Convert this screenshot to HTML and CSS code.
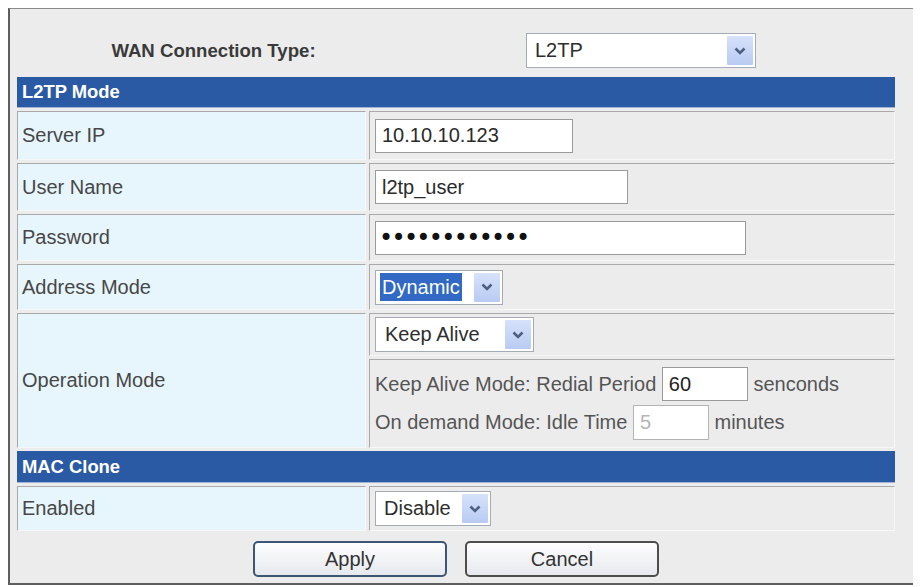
FILE: index.html
```html
<!DOCTYPE html>
<html lang="en">

<head>
    <meta charset="UTF-8">
    <meta name="viewport" content="width=device-width, initial-scale=1.0">
    <title>WAN Setup - L2TP</title>
    <link rel="stylesheet" href="styles.css">
</head>

<body>
    <div class="frame">
        <div class="wan-row">
            <div class="wan-label">WAN Connection Type:</div>
            <div class="wan-field">
                <span class="combo combo-wan">
                    <span class="combo-text">L2TP</span>
                    <span class="combo-btn"><svg width="12" height="8" viewBox="0 0 12 8"><path d="M1.5 1.5 L6 6 L10.5 1.5" fill="none" stroke="#4d5f82" stroke-width="2.6"/></svg></span>
                </span>
            </div>
        </div>

        <div class="form-grid">
            <div class="section">L2TP Mode</div>

            <div class="label">Server IP</div>
            <div class="field"><input type="text" class="txt w-ip" value="10.10.10.123"></div>

            <div class="label">User Name</div>
            <div class="field"><input type="text" class="txt w-user" value="l2tp_user"></div>

            <div class="label">Password</div>
            <div class="field"><input type="password" class="txt pwd" value="secretpasswd"></div>

            <div class="label">Address Mode</div>
            <div class="field">
                <span class="combo combo-addr">
                    <span class="combo-text"><span class="selected">Dynamic</span></span>
                    <span class="combo-btn"><svg width="12" height="8" viewBox="0 0 12 8"><path d="M1.5 1.5 L6 6 L10.5 1.5" fill="none" stroke="#4d5f82" stroke-width="2.6"/></svg></span>
                </span>
            </div>

            <div class="label op-label">Operation Mode</div>
            <div class="field">
                <span class="combo combo-op">
                    <span class="combo-text">Keep Alive</span>
                    <span class="combo-btn"><svg width="12" height="8" viewBox="0 0 12 8"><path d="M1.5 1.5 L6 6 L10.5 1.5" fill="none" stroke="#4d5f82" stroke-width="2.6"/></svg></span>
                </span>
            </div>
            <div class="field sub">
                <div class="sub-line">Keep Alive Mode: Redial Period <input type="text" class="txt w-period" value="60"> senconds</div>
                <div class="sub-line">On demand Mode: Idle Time <input type="text" class="txt w-idle" value="5" disabled> minutes</div>
            </div>

            <div class="section">MAC Clone</div>

            <div class="label">Enabled</div>
            <div class="field">
                <span class="combo combo-mac">
                    <span class="combo-text">Disable</span>
                    <span class="combo-btn"><svg width="12" height="8" viewBox="0 0 12 8"><path d="M1.5 1.5 L6 6 L10.5 1.5" fill="none" stroke="#4d5f82" stroke-width="2.6"/></svg></span>
                </span>
            </div>
        </div>

        <div class="actions">
            <button class="btn btn-default">Apply</button>
            <button class="btn">Cancel</button>
        </div>
    </div>
</body>

</html>
```

FILE: styles.css
```css
body {
    margin: 8px;
    background-color: #fff;
    font-family: "Liberation Sans", Arial, sans-serif;
    color: #3c3c3c;
}

.frame {
    width: 908px;
    box-sizing: border-box;
    background-color: #ececec;
    border: 2px solid #5e5e5e;
    border-top: 1px solid #8a8a8a;
    padding-bottom: 6px;
}

/* top line: connection type */
.wan-row {
    display: flex;
    padding-top: 24px;
    margin-left: 7px;
}

.wan-label {
    width: 393px;
    text-align: center;
    font-weight: bold;
    font-size: 18.6px;
    line-height: 35px;
    color: #3a3a3a;
}

.wan-field {
    padding-left: 116px;
}

/* main form grid */
.form-grid {
    display: grid;
    grid-template-columns: 349px 1fr;
    grid-template-rows: 31px 49px 48px 47px 46px 43px 89px 32px 45px;
    gap: 3px;
    margin: 9px 19px 0 7px;
}

.section {
    grid-column: 1 / 3;
    background-color: #2b5aa4;
    color: #fff;
    font-weight: bold;
    font-size: 18.4px;
    padding-left: 5px;
    display: flex;
    align-items: center;
    border-bottom: 1px solid #9fb4d4;
}

.label,
.field {
    border: 1px solid;
    border-color: #a9a9a9 #f7f7f7 #f7f7f7 #a9a9a9;
    display: flex;
    align-items: center;
    font-size: 20px;
}

.label {
    background-color: #e7f6fc;
    padding-left: 4px;
    color: #474747;
}

.field {
    padding-left: 5px;
}

.op-label {
    grid-row: span 2;
}

.sub {
    flex-direction: column;
    align-items: flex-start;
    justify-content: flex-start;
    padding-top: 7px;
    gap: 4px;
    font-size: 20px;
    color: #555;
}

.sub-line {
    height: 34px;
    display: flex;
    align-items: center;
    white-space: pre;
}

/* text inputs */
.txt {
    box-sizing: border-box;
    height: 34px;
    border: 1px solid #9a9a9a;
    background: #fff;
    font-family: "Liberation Sans", Arial, sans-serif;
    font-size: 20px;
    color: #2a2a2a;
    padding: 0 6px;
    margin: 0;
    outline: none;
}

.w-ip {
    width: 198px;
}

.w-user {
    width: 253px;
}

.pwd {
    width: 371px;
    font-family: "DejaVu Sans", sans-serif;
    font-size: 24px;
    letter-spacing: -1.7px;
    padding-left: 3px;
    color: #111;
}

.w-period {
    width: 86px;
    color: #222;
}

.w-idle {
    width: 76px;
    height: 35px;
    color: #b5b5b5;
    border-color: #b4b4b4;
}

/* fake dropdowns */
.combo {
    display: inline-flex;
    box-sizing: border-box;
    height: 35px;
    border: 1px solid #a4abb5;
    background: #fff;
    padding: 2px;
    font-size: 20px;
    color: #2e2e2e;
}

.combo-text {
    flex: 1;
    display: flex;
    align-items: center;
    padding-left: 6px;
}

.combo-btn {
    width: 26px;
    display: flex;
    align-items: center;
    justify-content: center;
    background: linear-gradient(#d6e2fb, #b9cbf3);
    border-radius: 1px;
}

.combo-wan {
    width: 230px;
}

.combo-addr {
    width: 128px;
}

.combo-addr .combo-text {
    padding-left: 2px;
}

.selected {
    background-color: #3169c4;
    color: #fff;
    padding: 1px 2px;
    line-height: 26px;
}

.combo-op {
    width: 159px;
}

.combo-op .combo-text {
    padding-left: 7px;
}

.combo-mac {
    width: 116px;
}

/* buttons */
.actions {
    display: flex;
    justify-content: center;
    gap: 18px;
    margin: 10px 19px 0 7px;
}

.btn {
    width: 194px;
    height: 36px;
    border: 2px solid #4d4d4d;
    border-radius: 5px;
    background: linear-gradient(#fdfdfd, #e6e9ee);
    font-family: "Liberation Sans", Arial, sans-serif;
    font-size: 20px;
    color: #333;
    padding: 0;
}

.btn-default {
    border-color: #3d5673;
}
```
